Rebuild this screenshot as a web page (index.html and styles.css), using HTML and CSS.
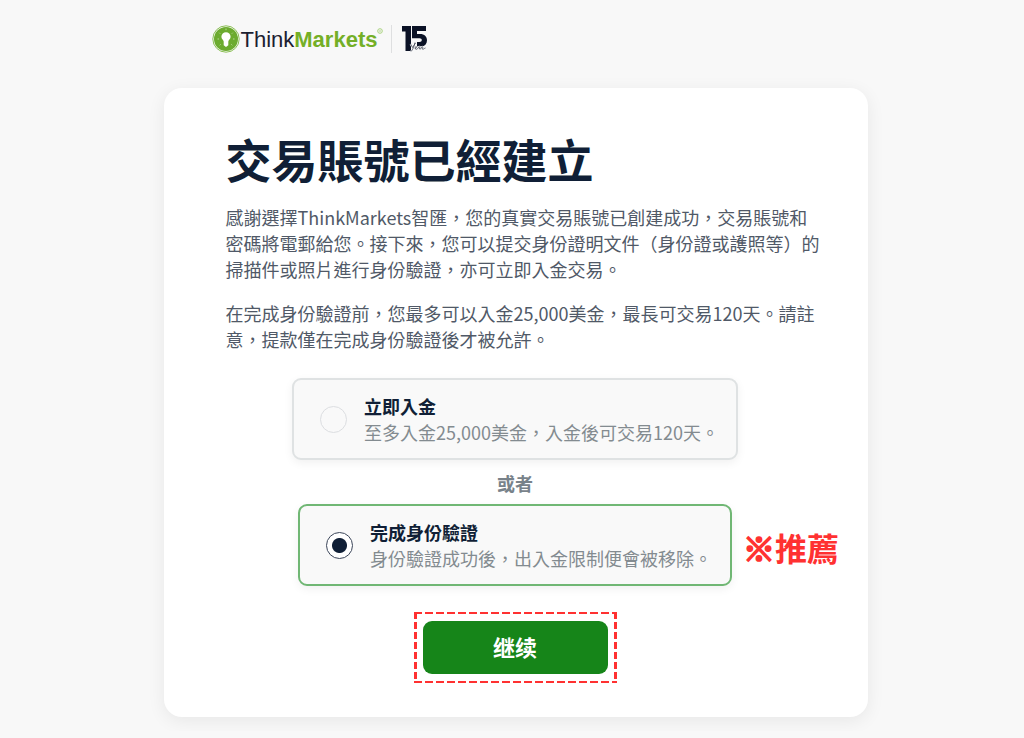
FILE: index.html
```html
<!DOCTYPE html>
<html lang="zh-Hant">
<head>
<meta charset="utf-8">
<meta name="viewport" content="width=device-width, initial-scale=1">
<title>ThinkMarkets</title>
<link rel="stylesheet" href="styles.css">
</head>
<body>
<div class="page">
  <header class="header">
    <a class="brand" href="#" aria-label="ThinkMarkets">
      <svg class="brand-mark" viewBox="0 0 28 28" aria-hidden="true">
        <circle cx="14" cy="14" r="13.2" fill="none" stroke="#8bbf55" stroke-width="1"/>
        <circle cx="14" cy="14" r="12" fill="#6cab2f"/>
        <path d="M14 7.200a4.600 4.600 0 0 0-4.600 4.600c0 2.200 1.900 2.900 2.300 4.800v3.600l2.300 1.800 2.300-1.800v-3.600c.400-1.900 2.300-2.600 2.300-4.800A4.600 4.600 0 0 0 14 7.200z" fill="#fff"/>
        <path d="M14 3.500v1.700M7.200 7.700l1 1M20.800 7.700l-1 1M5.500 14h1.500M22.500 14H21M7.700 20.300l1-1M20.300 20.300l-1-1" stroke="#b5d792" stroke-width="1"/>
      </svg>
      <span class="brand-name">Think<b>Markets</b></span>
      <svg class="brand-reg" viewBox="0 0 6 6" aria-hidden="true"><circle cx="3" cy="3" r="2.300" fill="none" stroke="#a9d27e"/><circle cx="3" cy="3" r=".8" fill="#a9d27e"/></svg>
    </a>
    <svg class="anniversary" viewBox="0 0 26 28" role="img" aria-label="15 Years">
      <path d="M1 1h9v25H4.500V6.500H1z" fill="#0b1226"/>
      <path d="M11 1h14v5h-9v3h3c4.500 0 7 2.700 7 6.300 0 3.300-2 5.700-5 6.200H16v-4.500h2.500c1.400 0 2.300-.7 2.300-1.900s-.9-1.900-2.300-1.900H11z" fill="#0b1226"/>
      <path d="M9.500 19l2 3.500 3-4.500M14 17.500c-1 4-2 7-4 9M14 23.500c2-.5 2-2 1-2s-1.500 3 .500 2.800c1.500-.2 2-2.600 3-2.600s-.8 2.800.500 2.600c1-.1 1.500-2.600 2.500-2.600s-.5 2 0 2.500 2-1 3-1.200" fill="none" stroke="#f8f8f8" stroke-width="1.800"/>
      <path d="M9.500 19l2 3.500 3-4.500M14 17.500c-1 4-2 7-4 9M14 23.500c2-.5 2-2 1-2s-1.500 3 .500 2.800c1.500-.2 2-2.600 3-2.600s-.8 2.800.500 2.600c1-.1 1.500-2.600 2.500-2.600s-.5 2 0 2.500 2-1 3-1.200" fill="none" stroke="#454a58" stroke-width=".8"/>
    </svg>
  </header>

  <main class="card">
    <h1 class="title">交易賬號已經建立</h1>
    <div class="intro">
      <p>感謝選擇ThinkMarkets智匯，您的真實交易賬號已創建成功，交易賬號和密碼將電郵給您。接下來，您可以提交身份證明文件（身份證或護照等）的掃描件或照片進行身份驗證，亦可立即入金交易。</p>
      <p>在完成身份驗證前，您最多可以入金25,000美金，最長可交易120天。請註意，提款僅在完成身份驗證後才被允許。</p>
    </div>
    <form class="choices">
      <label class="option option-wide" for="deposit">
        <input class="radio" type="radio" id="deposit" name="next">
        <span class="option-text"><strong>立即入金</strong><span>至多入金25,000美金，入金後可交易120天。</span></span>
      </label>
      <p class="or">或者</p>
      <div class="recommended">
        <label class="option option-selected" for="verify">
          <input class="radio" type="radio" id="verify" name="next" checked>
          <span class="option-text"><strong>完成身份驗證</strong><span>身份驗證成功後，出入金限制便會被移除。</span></span>
        </label>
        <span class="tag"><span class="tag-mark">※</span>推薦</span>
      </div>
      <div class="submit-frame">
        <button class="submit" type="button" lang="zh-Hans">继续</button>
      </div>
    </form>
  </main>
</div>
</body>
</html>
```
FILE: styles.css
```css
* {
  box-sizing: border-box;
}

body {
  margin: 0;
  background: #f8f8f8;
  color: #505967;
  font: 18px/26px "Noto Sans CJK TC", sans-serif;
}

p,
h1 {
  margin: 0;
}

.page {
  max-width: 751px;
  margin: 0 auto;
  padding: 24px 20px 14px 27px;
  overflow: hidden;
}

.header {
  display: flex;
  align-items: center;
  height: 30px;
  padding-left: 48px;
}

.brand {
  display: flex;
  align-items: center;
  text-decoration: none;
}

.brand-mark {
  width: 28px;
  height: 28px;
}

.brand-name {
  padding: 2px 0 0 1px;
  color: #1c2031;
  font: 22px/28px "Liberation Sans", Arial, sans-serif;
}

.brand-name b {
  color: #74af27;
}

.brand-reg {
  align-self: flex-start;
  width: 6px;
  height: 6px;
  margin-top: 4px;
}

.anniversary {
  box-sizing: content-box;
  width: 26px;
  height: 28px;
  margin-left: 8px;
  padding-left: 9px;
  border-left: 1px solid #dedfe0;
}

.card {
  margin-top: 34px;
  padding: 40px 46px 34px 62px;
  border-radius: 18px;
  background: #fff;
  box-shadow: 0 4px 18px rgba(0, 0, 0, 0.07);
}

.title {
  color: #101f36;
  font-size: 46px;
  font-weight: 700;
  line-height: 60px;
}

.intro {
  display: grid;
  gap: 18px;
  margin-top: 16px;
}

.choices {
  display: flex;
  flex-direction: column;
  align-items: center;
  margin: 26px 17px 0 0;
}

.option {
  display: flex;
  align-items: center;
  gap: 17px;
  width: 434px;
  max-width: 100%;
  min-height: 82px;
  padding: 12px 10px 12px 26px;
  border: 2px solid #dfe2e3;
  border-radius: 9px;
  background: #f9f9f9;
  box-shadow: 0 3px 10px rgba(0, 0, 0, 0.06);
}

.option-wide {
  width: 446px;
}

.option-selected {
  border-color: #70b774;
}

.radio {
  flex: none;
  width: 27px;
  height: 27px;
  margin: 0;
  appearance: none;
  border: 1px solid #dcdee1;
  border-radius: 50%;
}

.radio:checked {
  border-color: #3c465a;
  background: radial-gradient(circle, #101f36 0 7px, #fff 8px);
}

.option-text {
  display: grid;
  color: #838b90;
}

.option-text strong {
  color: #101f36;
}

.or {
  margin: 10px 0 8px;
  color: #78828a;
  font-weight: 700;
}

.recommended {
  position: relative;
}

.tag {
  position: absolute;
  top: 50%;
  left: 100%;
  margin: 2px 0 0 11px;
  transform: translateY(-50%);
  color: #ff3131;
  font-size: 32px;
  font-weight: 700;
  line-height: 40px;
  white-space: nowrap;
}

.tag-mark {
  -webkit-text-stroke: 2px #ff3131;
}

.submit-frame {
  margin-top: 26px;
  padding: 9px;
  background:
    repeating-linear-gradient(90deg, #ff3131 0 8px, transparent 8px 11px) top / 100% 2px no-repeat,
    repeating-linear-gradient(90deg, #ff3131 0 8px, transparent 8px 11px) bottom / 100% 2px no-repeat,
    repeating-linear-gradient(#ff3131 0 7px, transparent 7px 10px) left / 3px 100% no-repeat,
    repeating-linear-gradient(#ff3131 0 7px, transparent 7px 10px) right / 3px 100% no-repeat;
}

.submit {
  display: block;
  width: 185px;
  height: 53px;
  padding: 0 0 4px;
  border: 0;
  border-radius: 9px;
  background: #168519;
  color: #fff;
  font: 700 22px/30px "Noto Sans CJK SC", sans-serif;
}
```
